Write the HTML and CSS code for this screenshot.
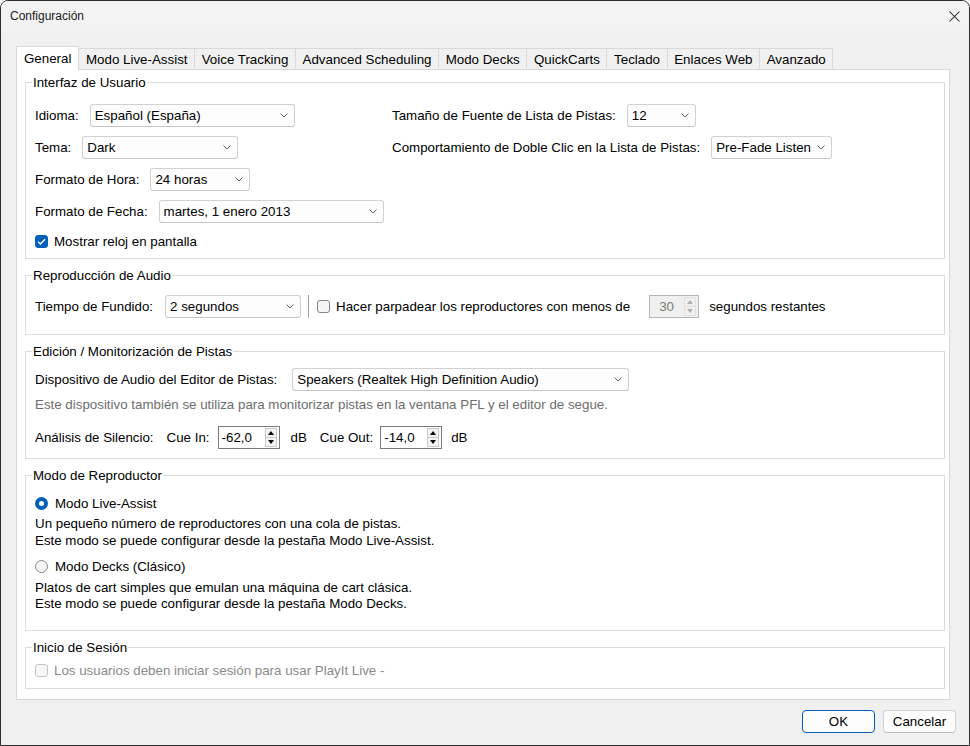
FILE: index.html
```html
<!DOCTYPE html>
<html lang="es">
<head>
<meta charset="utf-8">
<title>Configuración</title>
<link rel="stylesheet" href="styles.css">
</head>
<body>
<div class="window">
  <div class="titlebar">
    <span class="title">Configuración</span>
    <svg class="close" width="11" height="11" viewBox="0 0 11 11"><path d="M0.5 0.5 L10.5 10.5 M10.5 0.5 L0.5 10.5" stroke="#1a1a1a" stroke-width="1.05" fill="none"/></svg>
  </div>
  <div class="client">
    <div class="tabs">
      <div class="tab active">General</div>
      <div class="tab">Modo Live-Assist</div>
      <div class="tab">Voice Tracking</div>
      <div class="tab">Advanced Scheduling</div>
      <div class="tab">Modo Decks</div>
      <div class="tab">QuickCarts</div>
      <div class="tab">Teclado</div>
      <div class="tab">Enlaces Web</div>
      <div class="tab">Avanzado</div>
    </div>
    <div class="pane">
      <fieldset class="group">
        <legend>Interfaz de Usuario</legend>
        <div class="gbody g-ui">
          <div class="col-left">
            <div class="row"><span>Idioma:</span><div class="combo w-idioma"><span>Español (España)</span><svg width="8" height="5" viewBox="0 0 8 5"><path d="M0.5 0.5 L4 4 L7.5 0.5" stroke="#606060" fill="none"/></svg></div></div>
            <div class="row"><span>Tema:</span><div class="combo w-tema"><span>Dark</span><svg width="8" height="5" viewBox="0 0 8 5"><path d="M0.5 0.5 L4 4 L7.5 0.5" stroke="#606060" fill="none"/></svg></div></div>
            <div class="row"><span>Formato de Hora:</span><div class="combo w-hora"><span>24 horas</span><svg width="8" height="5" viewBox="0 0 8 5"><path d="M0.5 0.5 L4 4 L7.5 0.5" stroke="#606060" fill="none"/></svg></div></div>
            <div class="row"><span>Formato de Fecha:</span><div class="combo w-fecha"><span>martes, 1 enero 2013</span><svg width="8" height="5" viewBox="0 0 8 5"><path d="M0.5 0.5 L4 4 L7.5 0.5" stroke="#606060" fill="none"/></svg></div></div>
            <div class="row check-row"><span class="cb checked"><svg width="9" height="7" viewBox="0 0 9 7"><path d="M1 3.6 L3.4 6 L8 1.2" stroke="#fff" stroke-width="1.3" fill="none"/></svg></span><span>Mostrar reloj en pantalla</span></div>
          </div>
          <div class="col-right">
            <div class="row"><span>Tamaño de Fuente de Lista de Pistas:</span><div class="combo w-tam"><span>12</span><svg width="8" height="5" viewBox="0 0 8 5"><path d="M0.5 0.5 L4 4 L7.5 0.5" stroke="#606060" fill="none"/></svg></div></div>
            <div class="row"><span>Comportamiento de Doble Clic en la Lista de Pistas:</span><div class="combo w-doble"><span>Pre-Fade Listen</span><svg width="8" height="5" viewBox="0 0 8 5"><path d="M0.5 0.5 L4 4 L7.5 0.5" stroke="#606060" fill="none"/></svg></div></div>
          </div>
        </div>
      </fieldset>

      <fieldset class="group">
        <legend>Reproducción de Audio</legend>
        <div class="gbody g-audio">
          <div class="row">
            <span>Tiempo de Fundido:</span>
            <div class="combo w-fundido"><span>2 segundos</span><svg width="8" height="5" viewBox="0 0 8 5"><path d="M0.5 0.5 L4 4 L7.5 0.5" stroke="#606060" fill="none"/></svg></div>
            <span class="vsep"></span>
            <span class="cb"></span>
            <span class="flash-label">Hacer parpadear los reproductores con menos de</span>
            <div class="spin disabled w-30">
              <span class="spin-val">30</span>
              <span class="spin-btns"><span class="sb up"></span><span class="sb down"></span></span>
            </div>
            <span>segundos restantes</span>
          </div>
        </div>
      </fieldset>

      <fieldset class="group">
        <legend>Edición / Monitorización de Pistas</legend>
        <div class="gbody g-edit">
          <div class="row disp-row"><span>Dispositivo de Audio del Editor de Pistas:</span><div class="combo w-disp"><span>Speakers (Realtek High Definition Audio)</span><svg width="8" height="5" viewBox="0 0 8 5"><path d="M0.5 0.5 L4 4 L7.5 0.5" stroke="#606060" fill="none"/></svg></div></div>
          <div class="note">Este dispositivo también se utiliza para monitorizar pistas en la ventana PFL y el editor de segue.</div>
          <div class="row silence">
            <span class="sil-label">Análisis de Silencio:</span>
            <span class="cue-in">Cue In:</span>
            <div class="spin w-cue"><span class="spin-val left">-62,0</span><span class="spin-btns"><span class="sb up"></span><span class="sb down"></span></span></div>
            <span class="db">dB</span>
            <span class="cue-out">Cue Out:</span>
            <div class="spin w-cue"><span class="spin-val left">-14,0</span><span class="spin-btns"><span class="sb up"></span><span class="sb down"></span></span></div>
            <span class="db db2">dB</span>
          </div>
        </div>
      </fieldset>

      <fieldset class="group">
        <legend>Modo de Reproductor</legend>
        <div class="gbody g-mode">
          <div class="radio-row"><span class="rb on"></span><span>Modo Live-Assist</span></div>
          <div class="desc">Un pequeño número de reproductores con una cola de pistas.<br>Este modo se puede configurar desde la pestaña Modo Live-Assist.</div>
          <div class="radio-row second"><span class="rb"></span><span>Modo Decks (Clásico)</span></div>
          <div class="desc desc2">Platos de cart simples que emulan una máquina de cart clásica.<br>Este modo se puede configurar desde la pestaña Modo Decks.</div>
        </div>
      </fieldset>

      <fieldset class="group">
        <legend>Inicio de Sesión</legend>
        <div class="gbody g-login">
          <div class="row check-row dis"><span class="cb disabled"></span><span>Los usuarios deben iniciar sesión para usar PlayIt Live -</span></div>
        </div>
      </fieldset>
    </div>
    <div class="buttons">
      <button class="btn default">OK</button>
      <button class="btn">Cancelar</button>
    </div>
  </div>
</div>
</body>
</html>
```

FILE: styles.css
```css
* { box-sizing: border-box; }
html, body { margin: 0; padding: 0; }
body {
  width: 970px;
  height: 746px;
  background: #f0f0f0;
  font-family: "Liberation Sans", Arial, sans-serif;
  font-size: 13.33px;
  color: #000;
  overflow: hidden;
}
.window {
  width: 970px;
  height: 746px;
  border: 1px solid #2d2d2d;
  border-radius: 8px 8px 0 0;
  background: #f0f0f0;
  display: flex;
  flex-direction: column;
  overflow: hidden;
}
.titlebar {
  height: 30px;
  flex: none;
  background: #f3f3f3;
  display: flex;
  align-items: center;
  justify-content: space-between;
  padding: 0 9px 0 9px;
  font-size: 12px;
}
.title { color: #1a1a1a; }
.close { display: block; }
.client {
  flex: 1;
  padding: 15px 0 0 15px;
  display: flex;
  flex-direction: column;
}
.tabs {
  display: flex;
  align-items: flex-end;
  height: 23px;
  position: relative;
  z-index: 1;
}
.tab {
  height: 21px;
  display: flex;
  align-items: center;
  padding: 0 6.6px;
  border-top: 1px solid #d9d9d9;
  border-right: 1px solid #d9d9d9;
  background: #f0f0f0;
  white-space: nowrap;
}
.tab.active {
  height: 24px;
  margin-bottom: -1px;
  padding: 0 7px 1px;
  border-left: 1px solid #d9d9d9;
  background: #fff;
}
.pane {
  width: 934px;
  height: 631px;
  border: 1px solid #d9d9d9;
  background: #fff;
  padding: 5px 4px 0 8px;
  display: flex;
  flex-direction: column;
  gap: 9px;
}
.group {
  margin: 0;
  padding: 0;
  border: 1px solid #dcdcdc;
  min-width: 0;
}
.group legend {
  margin-left: 6px;
  padding: 0 1px;
  line-height: 15px;
  font-size: 13.33px;
}
.gbody { padding: 0 9px; }
.row {
  display: flex;
  align-items: center;
  height: 23px;
  gap: 11px;
  white-space: nowrap;
}
.combo {
  height: 23px;
  border: 1px solid #d1d1d1;
  border-bottom-color: #c4c4c4;
  border-radius: 3px;
  background: #fdfdfd;
  display: flex;
  align-items: center;
  justify-content: space-between;
  padding: 0 6px 0 4px;
}
.combo svg { display: block; flex: none; }
.w-idioma { width: 205px; }
.w-tema { width: 156px; }
.w-hora { width: 100px; }
.w-fecha { width: 225px; }
.w-tam { width: 69px; }
.w-doble { width: 121px; }
.w-fundido { width: 136px; }
.w-disp { width: 337px; }

.g-ui {
  display: grid;
  grid-template-columns: 357px 1fr;
  padding-top: 14px;
  padding-bottom: 8px;
}
.col-left, .col-right {
  display: flex;
  flex-direction: column;
  gap: 9px;
}
.check-row { height: 18px; gap: 6px; }
.cb {
  width: 13px;
  height: 13px;
  border: 1px solid #858585;
  border-radius: 3px;
  background: #f5f5f5;
  display: inline-flex;
  align-items: center;
  justify-content: center;
  flex: none;
}
.cb.checked {
  background: #005fb8;
  border-color: #005fb8;
}
.cb.checked svg { display: block; }
.cb.disabled {
  border-color: #c5c5c5;
  background: #f7f7f7;
}
.dis { color: #8a8a8a; }

.g-audio { padding-top: 12px; padding-bottom: 16px; }
.g-audio .row { gap: 0; }
.g-audio .combo { margin-left: 12px; }
.vsep {
  width: 1px;
  height: 23px;
  background: #a0a0a0;
  margin-left: 7px;
  margin-right: 8px;
}
.flash-label { margin-left: 6px; }
.spin {
  height: 23px;
  border: 1px solid #7a7a7a;
  background: #fff;
  display: flex;
  align-items: center;
  justify-content: space-between;
  padding: 0 2px 0 3px;
}
.spin.disabled {
  border-color: #b5b5b5;
  background: #f0f0f0;
  color: #7a7a7a;
}
.w-30 { width: 50px; margin-left: 19px; margin-right: 10px; padding-left: 9px; }
.w-cue { width: 62px; }
.spin-btns {
  display: flex;
  flex-direction: column;
  width: 12px;
  height: 19px;
}
.sb {
  flex: 1;
  border: 1px solid #c8c8c8;
  background: #f4f4f4;
  position: relative;
}
.sb + .sb { border-top: none; }
.sb::after {
  content: "";
  position: absolute;
  left: 2px;
  top: 2px;
  border-left: 3px solid transparent;
  border-right: 3px solid transparent;
}
.sb.up::after { border-bottom: 4px solid #000; }
.sb.down::after { border-top: 4px solid #000; top: 2px; }
.spin.disabled .sb { border-color: #e0e0e0; background: #f0f0f0; }
.spin.disabled .sb.up::after { border-bottom-color: #b0b0b0; }
.spin.disabled .sb.down::after { border-top-color: #b0b0b0; }

.g-edit { padding-top: 9px; padding-bottom: 9px; }
.disp-row { gap: 15px; }
.note {
  color: #6d6d6d;
  line-height: 16px;
  margin-top: 6px;
  white-space: nowrap;
}
.silence { margin-top: 13px; gap: 0; }
.cue-in { margin-left: 13px; margin-right: 8px; }
.db { margin-left: 11px; }
.db2 { margin-left: 9px; }
.cue-out { margin-left: 13px; margin-right: 7px; }

.g-mode { padding-top: 11px; padding-bottom: 18px; }
.radio-row {
  display: flex;
  align-items: center;
  height: 18px;
  gap: 7px;
}
.radio-row.second { margin-top: 8px; }
.rb {
  width: 13px;
  height: 13px;
  border-radius: 50%;
  border: 1px solid #858585;
  background: #f5f5f5;
  flex: none;
}
.rb.on {
  border: 4px solid #005fb8;
  background: #fff;
}
.desc {
  margin-top: 4px;
  line-height: 16.5px;
  white-space: nowrap;
}
.desc2 { margin-top: 5px; line-height: 16px; }

.g-login { padding-top: 6px; padding-bottom: 9px; }

.buttons {
  display: flex;
  justify-content: flex-end;
  gap: 8px;
  margin-top: 10px;
  padding-right: 13px;
}
.btn {
  width: 73px;
  height: 23px;
  border: 1px solid #d0d0d0;
  border-bottom-color: #bdbdbd;
  border-radius: 4px;
  background: #fdfdfd;
  font-family: "Liberation Sans", Arial, sans-serif;
  font-size: 13.33px;
  color: #000;
  padding: 0;
}
.btn.default {
  border: 1px solid #005fb8;
}
```
